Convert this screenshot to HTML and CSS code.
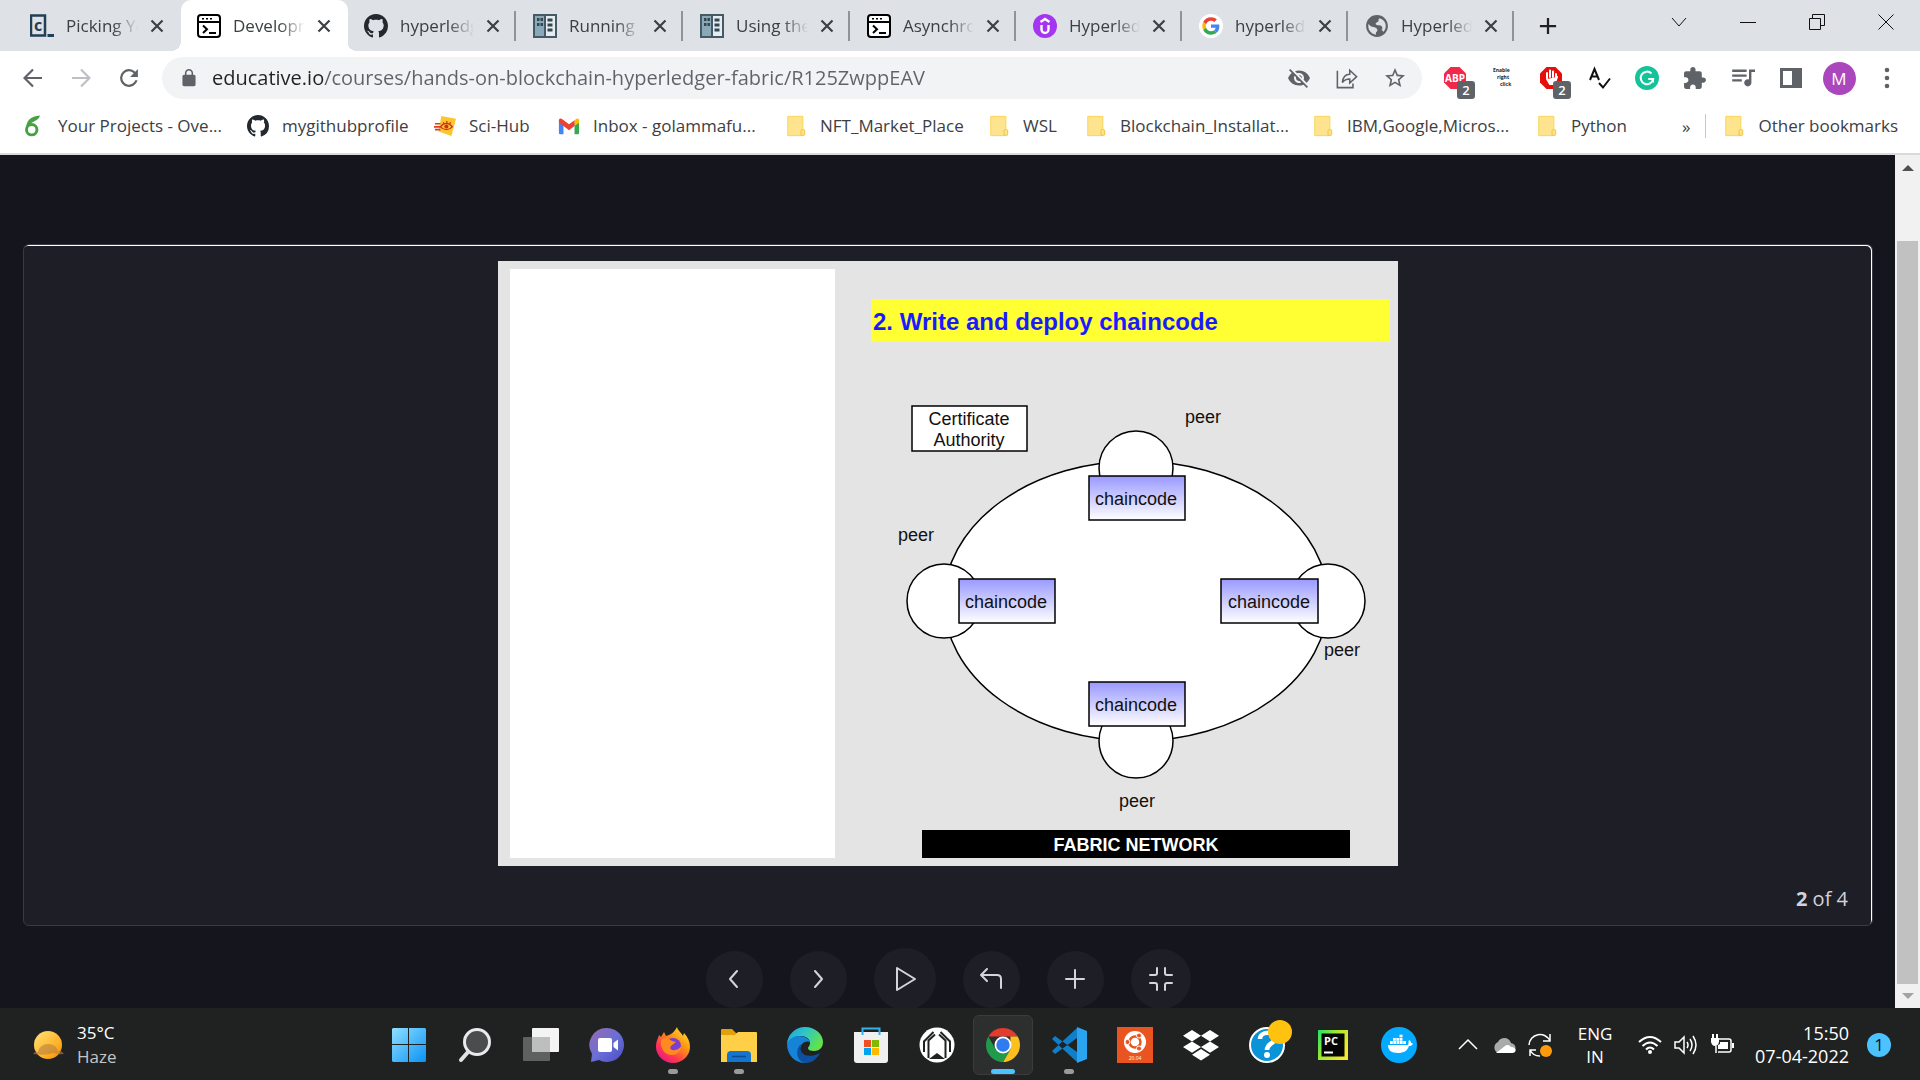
FILE: index.html
```html
<!DOCTYPE html>
<html lang="en">
<head>
<meta charset="utf-8">
<meta name="viewport" content="width=device-width, initial-scale=1">
<title>Developing with Hyperledger Fabric</title>
<link rel="stylesheet" href="styles.css">
</head>
<body>
<svg class="sprite" aria-hidden="true">
  <symbol id="i-github" viewBox="0 0 16 16"><path d="M8 0C3.58 0 0 3.58 0 8c0 3.54 2.29 6.53 5.47 7.59.4.07.55-.17.55-.38 0-.19-.01-.82-.01-1.49-2.01.37-2.53-.49-2.69-.94-.09-.23-.48-.94-.82-1.13-.28-.15-.68-.52-.01-.53.63-.01 1.08.58 1.23.82.72 1.21 1.87.87 2.33.66.07-.52.28-.87.51-1.07-1.78-.2-3.64-.89-3.64-3.95 0-.87.31-1.59.82-2.15-.08-.2-.36-1.02.08-2.12 0 0 .67-.21 2.2.82.64-.18 1.32-.27 2-.27s1.36.09 2 .27c1.53-1.04 2.2-.82 2.2-.82.44 1.1.16 1.92.08 2.12.51.56.82 1.27.82 2.15 0 3.07-1.87 3.75-3.65 3.95.29.25.54.73.54 1.48 0 1.07-.01 1.93-.01 2.2 0 .21.15.46.55.38A8.01 8.01 0 0 0 16 8c0-4.42-3.58-8-8-8z" fill="#24292f"/></symbol>
  <symbol id="i-terminal" viewBox="0 0 24 24"><rect x="1" y="1" width="22" height="22" rx="3" fill="#fff" stroke="#000" stroke-width="2"/><path d="M1 8h22" stroke="#000" stroke-width="2"/><path d="M5 4.700h2M9 4.700h2M13 4.700h2" stroke="#000" stroke-width="1.500"/><path d="M6 11.500l4 3.700-4 3.800M12 19h7" fill="none" stroke="#000" stroke-width="2"/></symbol>
  <symbol id="i-servers" viewBox="0 0 24 24"><rect x="1" y="1" width="22" height="22" fill="#e4eef2" stroke="#455a64" stroke-width="2"/><path d="M2 2h10v20H2z" fill="#8aa9b8"/><path d="M12 1v22" stroke="#455a64" stroke-width="2"/><path d="M4 5.500h2.500M7.500 5.500H10M4 10.500h2.500M7.500 10.500H10M14.500 6h5M14.500 11h5M14.500 16h5" stroke="#37474f" stroke-width="3"/></symbol>
  <symbol id="i-close" viewBox="0 0 14 14"><path d="M1.500 1.500l11 11M12.500 1.500l-11 11" stroke="#3c4043" stroke-width="2.200"/></symbol>
  <symbol id="i-folder" viewBox="0 0 20 24"><path d="M1 1.500h16.500v15l2 1v5H1z" fill="#ffe48f"/><path d="M1 1.500h16.500v14M1 1.500v21h16" fill="none" stroke="#fbd34d"/><path d="M15.500 22v-5.500q2-1.500 4 0v5q-2 1-4 .5z" fill="#ffe48f" stroke="#efc23d"/></symbol>
  <symbol id="i-hex" viewBox="0 0 24 24"><path d="M7.500 1h9L23 7.500v9L16.500 23h-9L1 16.500v-9z"/></symbol>
</svg>

<header class="browser">
  <div class="tabstrip">
    <nav class="tabs" aria-label="Open tabs">
      <div class="tab"><svg class="fav" viewBox="0 0 24 24"><path d="M1 1.500h14v20H1z" fill="none" stroke="#204056" stroke-width="2.500"/><text x="4" y="17" class="glyph-c">c</text><path d="M17.500 21.500H24" stroke="#204056" stroke-width="3"/></svg><span class="tab-title">Picking Your</span><button class="close" aria-label="Close tab"><svg><use href="#i-close"/></svg></button></div>
      <div class="tab active"><svg class="fav"><use href="#i-terminal"/></svg><span class="tab-title">Developme</span><button class="close" aria-label="Close tab"><svg><use href="#i-close"/></svg></button></div>
      <div class="tab"><svg class="fav"><use href="#i-github"/></svg><span class="tab-title">hyperledger</span><button class="close" aria-label="Close tab"><svg><use href="#i-close"/></svg></button></div>
      <div class="tab"><svg class="fav"><use href="#i-servers"/></svg><span class="tab-title">Running</span><button class="close" aria-label="Close tab"><svg><use href="#i-close"/></svg></button></div>
      <div class="tab"><svg class="fav"><use href="#i-servers"/></svg><span class="tab-title">Using the</span><button class="close" aria-label="Close tab"><svg><use href="#i-close"/></svg></button></div>
      <div class="tab"><svg class="fav"><use href="#i-terminal"/></svg><span class="tab-title">Asynchron</span><button class="close" aria-label="Close tab"><svg><use href="#i-close"/></svg></button></div>
      <div class="tab"><svg class="fav" viewBox="0 0 24 24"><circle cx="12" cy="12" r="12" fill="#a435f0"/><path d="M7.500 8L12 5l4.500 3M8.500 11v4.500a3.500 3.500 0 0 0 7 0V11" fill="none" stroke="#fff" stroke-width="2.400"/></svg><span class="tab-title">Hyperledger</span><button class="close" aria-label="Close tab"><svg><use href="#i-close"/></svg></button></div>
      <div class="tab"><svg class="fav" viewBox="-9 -9 66 66"><circle cx="24" cy="24" r="33" fill="#fff"/><path fill="#EA4335" d="M24 9.500c3.540 0 6.710 1.220 9.210 3.600l6.850-6.850C35.900 2.380 30.470 0 24 0 14.620 0 6.510 5.380 2.560 13.220l7.980 6.190C12.430 13.720 17.740 9.500 24 9.500z"/><path fill="#4285F4" d="M46.980 24.550c0-1.570-.15-3.090-.38-4.550H24v9.020h12.940c-.58 2.960-2.260 5.480-4.780 7.180l7.730 6c4.510-4.180 7.090-10.360 7.090-17.650z"/><path fill="#FBBC05" d="M10.530 28.590c-.48-1.450-.76-2.990-.76-4.590s.27-3.140.76-4.590l-7.980-6.190C.92 16.460 0 20.120 0 24c0 3.880.92 7.540 2.560 10.780l7.970-6.190z"/><path fill="#34A853" d="M24 48c6.480 0 11.930-2.130 15.890-5.810l-7.730-6c-2.150 1.450-4.920 2.300-8.160 2.300-6.260 0-11.570-4.220-13.470-9.910l-7.980 6.190C6.510 42.620 14.620 48 24 48z"/></svg><span class="tab-title">hyperledger</span><button class="close" aria-label="Close tab"><svg><use href="#i-close"/></svg></button></div>
      <div class="tab"><svg class="fav" viewBox="1 1 22 22"><path fill="#5f6368" d="M12 2C6.480 2 2 6.480 2 12s4.480 10 10 10 10-4.480 10-10S17.520 2 12 2zm-1 17.930c-3.950-.49-7-3.850-7-7.930 0-.62.08-1.210.21-1.790L6 12c2 1.500 4 .5 5.500 2s1 2.500-.5 4zm6.900-2.540c-.26-.81-1-1.390-1.900-1.390 1-1.500 1.500-2.500 0-4-1.500-1-4 0-5-1.500-.8-1.500 1-2 2-2.500 1-.6-.5-2 1.500-3 2.500.8 5.500 3.060 5.500 7 0 2.080-.8 3.970-2.100 5.390z"/></svg><span class="tab-title">Hyperledger</span><button class="close" aria-label="Close tab"><svg><use href="#i-close"/></svg></button></div>
    </nav>
    <button class="newtab" aria-label="New tab"><svg viewBox="0 0 20 20"><path d="M10 1v18M1 10h18" stroke="#202124" stroke-width="2.500"/></svg></button>
    <div class="window-controls">
      <button aria-label="Search tabs"><svg viewBox="0 0 16 16"><path d="M1 4l7 8 7-8" /></svg></button>
      <button aria-label="Minimize"><svg viewBox="0 0 16 16"><path d="M0 8.500h16"/></svg></button>
      <button aria-label="Restore"><svg viewBox="0 0 16 16"><path d="M.5 4.500h11v11H.5zM3.500 4V.5h12v11H12"/></svg></button>
      <button aria-label="Close window"><svg viewBox="0 0 16 16"><path d="M.5.5l15 15M15.500.5l-15 15"/></svg></button>
    </div>
  </div>

  <div class="toolbar">
    <div class="nav-buttons">
      <button aria-label="Back"><svg viewBox="0 0 20 20"><path d="M19 10H2M10 1.500L1.500 10l8.500 8.500" fill="none" stroke="#5f6368" stroke-width="2.200"/></svg></button>
      <button aria-label="Forward" disabled><svg viewBox="0 0 20 20"><path d="M1 10h17M10 1.500l8.500 8.500-8.500 8.500" fill="none" stroke="#bdc1c6" stroke-width="2.200"/></svg></button>
      <button aria-label="Reload"><svg viewBox="3 3 18 18"><path fill="#5f6368" d="M17.650 6.350A7.958 7.958 0 0 0 12 4a8 8 0 1 0 7.730 10h-2.080A6 6 0 1 1 12 6c1.660 0 3.140.69 4.220 1.780L13 11h7V4z"/></svg></button>
    </div>
    <div class="omnibox">
      <svg class="lock" viewBox="3 1 18 22"><path fill="#5f6368" d="M18 8h-1V6c0-2.760-2.240-5-5-5S7 3.240 7 6v2H6c-1.100 0-2 .9-2 2v10c0 1.100.9 2 2 2h12c1.100 0 2-.9 2-2V10c0-1.100-.9-2-2-2zM15.100 8H8.900V6c0-1.710 1.390-3.100 3.100-3.100s3.100 1.390 3.100 3.100z"/></svg>
      <input class="url" type="text" aria-label="Address" value="educative.io/courses/hands-on-blockchain-hyperledger-fabric/R125ZwppEAV">
      <button aria-label="Third-party cookies blocked"><svg viewBox="1 1 22 22"><path fill="#5f6368" d="M12 7c2.760 0 5 2.240 5 5 0 .65-.13 1.260-.36 1.830l2.920 2.920c1.510-1.260 2.700-2.890 3.430-4.750-1.730-4.390-6-7.500-11-7.500-1.400 0-2.740.25-3.980.7l2.160 2.160C10.740 7.130 11.350 7 12 7zM2 4.270l2.280 2.280.46.46A11.800 11.800 0 0 0 1 12c1.730 4.390 6 7.500 11 7.500 1.550 0 3.030-.3 4.380-.84l.42.42L19.730 22 21 20.730 3.270 3zM7.530 9.800l1.550 1.550c-.05.21-.08.43-.08.65 0 1.660 1.340 3 3 3 .22 0 .44-.03.65-.08l1.550 1.550c-.67.33-1.410.53-2.200.53-2.760 0-5-2.240-5-5 0-.79.2-1.530.53-2.200zm4.310-.78l3.150 3.150.02-.16c0-1.660-1.340-3-3-3z"/></svg></button>
      <button aria-label="Share"><svg viewBox="0 0 24 24"><path d="M1.500 4v18.500h17V18M7 17c.5-6 3.500-9 8-9V3.500l7.500 7-7.500 7V13c-3.500 0-6 1-8 4z" fill="none" stroke="#5f6368" stroke-width="1.700"/></svg></button>
      <button aria-label="Bookmark this tab"><svg viewBox="1 1 22 22"><path fill="#5f6368" d="M22 9.240l-7.190-.62L12 2 9.190 8.630 2 9.240l5.460 4.730L5.820 21 12 17.270 18.180 21l-1.630-7.030zM12 15.400l-3.760 2.270 1-4.280-3.320-2.880 4.380-.38L12 6.100l1.710 4.040 4.380.38-3.320 2.880 1 4.280z"/></svg></button>
    </div>
    <div class="extensions">
      <button aria-label="Adblock Plus"><svg viewBox="0 0 24 24"><use href="#i-hex" fill="#f0284a"/><text x="12" y="16" class="glyph-abp">ABP</text></svg><span class="badge">2</span></button>
      <button aria-label="Enable right click"><svg viewBox="0 0 24 24"><text x="2" y="6" class="glyph-tiny">Enable</text><text x="6" y="13" class="glyph-tiny">right</text><text x="9" y="20" class="glyph-tiny">click</text></svg></button>
      <button aria-label="AdBlock"><svg viewBox="0 0 24 24"><use href="#i-hex" fill="#e60d0d"/><path d="M8 12V7M11 11V4.500M14 11V5.500M17 12V8M8 13l3 5h4.500l2.500-7" stroke="#fff" stroke-width="2" stroke-linecap="round" fill="#fff"/></svg><span class="badge">2</span></button>
      <button aria-label="Spell check"><svg viewBox="0 0 24 24"><path d="M3 14L7.500 3 12 14M5 10.500h6M12 17l4 4.500 7-9" fill="none" stroke="#111" stroke-width="2"/></svg></button>
      <button aria-label="Grammar check"><svg viewBox="0 0 24 24"><circle cx="12" cy="12" r="12" fill="#15c39a"/><path d="M16.500 7.500a6.300 6.300 0 1 0 1.700 5.500h-5M18 16.500V13" fill="none" stroke="#fff" stroke-width="2"/></svg></button>
      <button aria-label="Extensions"><svg viewBox="1 0 23 23"><path fill="#5f6368" d="M20.500 11H19V7c0-1.100-.9-2-2-2h-4V3.500C13 2.120 11.880 1 10.500 1S8 2.120 8 3.500V5H4c-1.100 0-1.990.9-1.990 2v3.800H3.500c1.490 0 2.700 1.210 2.700 2.700s-1.210 2.700-2.700 2.700H2V20c0 1.100.9 2 2 2h3.800v-1.500c0-1.490 1.210-2.700 2.700-2.700 1.490 0 2.700 1.210 2.700 2.700V22H17c1.100 0 2-.9 2-2v-4h1.500c1.380 0 2.500-1.120 2.500-2.500S21.880 11 20.500 11z"/></svg></button>
      <button aria-label="Media controls"><svg viewBox="2 3 20 20"><path fill="#5f6368" d="M15 6H3v2h12V6zm0 4H3v2h12v-2zM3 16h8v-2H3v2zM17 6v8.180c-.31-.11-.65-.18-1-.18-1.660 0-3 1.340-3 3s1.340 3 3 3 3-1.340 3-3V8h3V6h-5z"/></svg></button>
      <button aria-label="Side panel"><svg viewBox="0 0 24 24"><path d="M2.500 3.500h19v17h-19zM14.500 3.500h7v17h-7z" fill="none" stroke="#5f6368" stroke-width="3"/><path d="M15 3h6v18h-6z" fill="#5f6368"/></svg></button>
      <button aria-label="Profile"><span class="avatar">M</span></button>
      <button aria-label="Menu"><svg viewBox="0 0 24 24"><g fill="#5f6368"><circle cx="12" cy="4" r="2.300"/><circle cx="12" cy="12" r="2.300"/><circle cx="12" cy="20" r="2.300"/></g></svg></button>
    </div>
  </div>

  <nav class="bookmarks" aria-label="Bookmarks">
    <a href="#"><svg viewBox="0 0 24 24"><circle cx="9.500" cy="16" r="5.700" fill="none" stroke="#47a141" stroke-width="3.200"/><path d="M3.500 15C3 7 8 1 18.500.5 17 7 10 6 7 11" fill="#47a141"/></svg>Your Projects - Ove...</a>
    <a href="#"><svg><use href="#i-github"/></svg>mygithubprofile</a>
    <a href="#"><svg viewBox="0 0 24 24"><path d="M8 1l16 3-5 19L5 18z" fill="#fdc52e"/><path d="M1 9.500h6M0 13h7M1 16h6" stroke="#d9411e" stroke-width="1.800"/><path d="M7 13c4-5 9-5 13 0-4 4-9 4-13 0zM10 8l1 2M14 6.500V9M18 8l-1 2" fill="none" stroke="#c8321c" stroke-width="1.400"/><circle cx="13.500" cy="12.500" r="2.200" fill="#c8321c"/></svg>Sci-Hub</a>
    <a href="#"><svg viewBox="0 0 24 24"><path d="M1 5v14.500q0 1.500 1.500 1.500H6V9z" fill="#4285f4"/><path d="M23 5v14.500q0 1.500-1.500 1.500H18V9z" fill="#34a853"/><path d="M18 6l2-1.800q3-1.200 3 2V8.500L18 12z" fill="#fbbc04"/><path d="M1 8.500V6q0-3 3-1.800l8 6 6-4.500V12l-6 4.500L6 12z" fill="#ea4335"/></svg>Inbox - golammafu...</a>
    <a href="#"><svg><use href="#i-folder"/></svg>NFT_Market_Place</a>
    <a href="#"><svg><use href="#i-folder"/></svg>WSL</a>
    <a href="#"><svg><use href="#i-folder"/></svg>Blockchain_Installat...</a>
    <a href="#"><svg><use href="#i-folder"/></svg>IBM,Google,Micros...</a>
    <a href="#"><svg><use href="#i-folder"/></svg>Python</a>
    <button class="more" aria-label="More bookmarks">»</button>
    <a class="other" href="#"><svg><use href="#i-folder"/></svg>Other bookmarks</a>
  </nav>
</header>

<div class="viewport">
  <main class="page">
    <section class="card">
      <svg class="slide" viewBox="0 0 900 605" role="img" aria-label="Write and deploy chaincode">
        <defs><linearGradient id="cc" x1="0" y1="0" x2="0" y2="1"><stop offset="0" stop-color="#9999ff"/><stop offset="1" stop-color="#fff"/></linearGradient></defs>
        <rect width="900" height="605" fill="#e4e4e4"/>
        <rect x="12" y="8" width="325" height="589" fill="#fff"/>
        <rect x="373" y="38" width="519" height="43" fill="#ff3"/>
        <text class="slide-title" x="375" y="69">2. Write and deploy chaincode</text>
        <g class="shape">
          <rect x="414" y="145" width="115" height="45"/>
          <ellipse cx="638" cy="340" rx="192" ry="140"/>
          <circle cx="638" cy="207" r="37"/>
          <circle cx="446" cy="340" r="37"/>
          <circle cx="830" cy="340" r="37"/>
          <circle cx="638" cy="480" r="37"/>
        </g>
        <g class="shape code">
          <rect x="591" y="215" width="96" height="44"/>
          <rect x="461" y="318" width="96" height="44"/>
          <rect x="723" y="318" width="97" height="44"/>
          <rect x="591" y="421" width="96" height="44"/>
        </g>
        <g class="label">
          <text x="471" y="164">Certificate</text><text x="471" y="185">Authority</text>
          <text x="638" y="244">chaincode</text><text x="508" y="347">chaincode</text>
          <text x="771" y="347">chaincode</text><text x="638" y="450">chaincode</text>
          <text x="705" y="162">peer</text><text x="418" y="280">peer</text>
          <text x="844" y="395">peer</text><text x="639" y="546">peer</text>
        </g>
        <rect x="424" y="569" width="428" height="28" fill="#000"/>
        <text class="network" x="638" y="590">FABRIC NETWORK</text>
      </svg>
      <p class="counter"><b>2</b> of 4</p>
    </section>
    <div class="controls">
      <button aria-label="Previous"><svg viewBox="0 0 24 24"><path d="M15 4l-7 8 7 8"/></svg></button>
      <button aria-label="Next"><svg viewBox="0 0 24 24"><path d="M9 4l7 8-7 8"/></svg></button>
      <button class="play" aria-label="Play"><svg viewBox="0 0 24 24"><path d="M4 1v22L22 12z"/></svg></button>
      <button aria-label="Restart"><svg viewBox="0 0 24 24"><path d="M8 2L2 8l6 6M2 8h16q4 0 4 4v9"/></svg></button>
      <button aria-label="Zoom in"><svg viewBox="0 0 24 24"><path d="M12 3v18M3 12h18"/></svg></button>
      <button class="shrink" aria-label="Exit full screen"><svg viewBox="0 0 24 24"><path d="M8 1v5q0 2-2 2H1M16 1v5q0 2 2 2h5M8 23v-5q0-2-2-2H1M16 23v-5q0-2 2-2h5"/></svg></button>
    </div>
  </main>
  <div class="scrollbar" aria-hidden="true"><span class="arrow up"></span><span class="thumb"></span><span class="arrow down"></span></div>
</div>

<footer class="taskbar">
  <div class="weather">
    <svg viewBox="0 0 32 32"><defs><linearGradient id="sun" x1="0" y1="0" x2="1" y2="1"><stop offset="0" stop-color="#ffe27a"/><stop offset=".6" stop-color="#ffb52e"/><stop offset="1" stop-color="#f78a00"/></linearGradient></defs><circle cx="16" cy="16" r="14" fill="url(#sun)"/><path d="M1 25q2-3 5-2 2-8 10-8t10 7q3-1 6 3-8 1-10-1-9 3-21 1z" fill="#b5803f" opacity=".6"/></svg>
    <p>35°C<br><span>Haze</span></p>
  </div>
  <nav class="apps" aria-label="Apps">
    <button aria-label="Start"><svg viewBox="0 0 36 36"><defs><linearGradient id="win" x1="0" y1="0" x2="1" y2="1"><stop offset="0" stop-color="#8fe0ff"/><stop offset="1" stop-color="#0a92f5"/></linearGradient></defs><path fill="url(#win)" d="M2 1h15v16H1V2zM18 1h16l1 1v15H18zM1 18h16v17H2l-1-1zM18 18h17v16l-1 1H18z"/></svg></button>
    <button aria-label="Search"><svg viewBox="0 0 36 36"><circle cx="20" cy="15" r="12.500" fill="#4a4c4d" stroke="#e8eaeb" stroke-width="3"/><path d="M11 25l-7 8" stroke="#e0e3e5" stroke-width="4" stroke-linecap="round"/></svg></button>
    <button aria-label="Task view"><svg viewBox="0 0 36 36"><rect x="9" y="1" width="27" height="24" rx="1" fill="#f4f4f4"/><rect x="0" y="10" width="27" height="24" rx="1" fill="#5f6060"/><path d="M9 10h18v15H9z" fill="#bebebe"/></svg></button>
    <button aria-label="Chat"><svg viewBox="0 0 36 36"><defs><linearGradient id="chat" x1="0" y1="0" x2="1" y2="1"><stop offset="0" stop-color="#9a6aae"/><stop offset=".5" stop-color="#6b6fd6"/><stop offset="1" stop-color="#4b4fc4"/></linearGradient></defs><path d="M18 1a17 17 0 1 1-8 32l-8 2 1-8A17 17 0 0 1 18 1z" fill="url(#chat)"/><rect x="9" y="11" width="14" height="14" rx="2" fill="#fff"/><path d="M24.500 16l4.500-3.500v11L24.500 20z" fill="#fff"/></svg></button>
    <button class="open" aria-label="Firefox"><svg viewBox="0 0 36 36"><defs><linearGradient id="fx" x1="1" y1="0" x2=".2" y2="1"><stop offset="0" stop-color="#fff44f"/><stop offset=".4" stop-color="#ff980e"/><stop offset=".75" stop-color="#ff3750"/><stop offset="1" stop-color="#e31587"/></linearGradient></defs><path d="M22 0c1 4 5 6 6 9l1-3c4 4 6 9 6 14a17 16 0 0 1-34 0c0-6 2-8 3-12l2 2 3-5 2 4c4-1 8-3 11-9z" fill="url(#fx)"/><circle cx="18" cy="19" r="8" fill="#7a3fd0"/><path d="M6 13c5-4 8-1 11 1l4 1-5 4c-2 2 0 5 4 4 3 0 5-3 7-4-1 6-6 9-10 9C10 28 5 22 6 13z" fill="#ff8a1e"/></svg></button>
    <button class="open" aria-label="File Explorer"><svg viewBox="0 0 36 36"><path d="M0 3q0-1 1-1h10l4 4h19v10H0z" fill="#e3a008"/><path d="M0 8h14l3-3h18q1 0 1 1v29H0z" fill="#ffcf48"/><path d="M6 35v-7q0-4 4-4h16q4 0 4 4v7z" fill="#1375cf"/><path d="M11 29.500h14" stroke="#0b4a8f" stroke-width="1.500"/></svg></button>
    <button aria-label="Edge"><svg viewBox="0 0 36 36"><defs><linearGradient id="ed" x1="0" y1="0" x2="1" y2=".5"><stop offset="0" stop-color="#1fa0e0"/><stop offset=".5" stop-color="#2fc6c6"/><stop offset="1" stop-color="#62e24a"/></linearGradient></defs><path d="M0 17A18 18 0 0 1 18 0c10 0 18 7 18 15 0 6-4 9-9 9-4 0-6-1-6-3 0-1 2-2 2-5 0-4-4-7-9-7-6 0-11 3-14 8z" fill="url(#ed)"/><path d="M0 17c2-5 6-8 12-8 6 0 10 3 11 6-4-2-10 1-10 8 0 7 6 11 14 10a18 18 0 0 1-9 3C8 36 0 28 0 17z" fill="#1583d8"/><path d="M14 17c-3 9 5 16 19 9-3 6-8 10-15 10C9 34 8 22 14 17z" fill="#0d50a0"/></svg></button>
    <button aria-label="Microsoft Store"><svg viewBox="0 0 36 36"><path d="M9.500 6V1.500h17V6" fill="none" stroke="#35b2ea" stroke-width="2"/><path d="M1 5h34v28q0 3-3 3H4q-3 0-3-3z" fill="#f0f0f0"/><path d="M9.500 8V5M26.500 8V5" stroke="#35b2ea" stroke-width="2"/><path d="M11 13h7v7h-7z" fill="#f25022"/><path d="M19 13h7v7h-7z" fill="#7fba00"/><path d="M11 21h7v7h-7z" fill="#00a4ef"/><path d="M19 21h7v7h-7z" fill="#ffb900"/></svg></button>
    <button aria-label="Launcher"><svg viewBox="0 0 36 36"><circle cx="18" cy="18" r="17.500" fill="#fff"/><path d="M5 25V14.500L14.500 5M31 25V14.500L21.500 5M9.500 31V13.500L16 7.500M26.500 31V13.500L20 7.500" fill="none" stroke="#202222" stroke-width="2"/><path d="M10 32l8-6 8 6z" fill="#202222"/></svg></button>
    <button class="current" aria-label="Chrome"><svg viewBox="0 0 36 36"><path d="M3.300 9.500a17 17 0 0 1 29.400 0H18z" fill="#e33b2e"/><path d="M32.700 9.500A17 17 0 0 1 18 35l7.400-12.700L25.400 9.500z" fill="#fcc01e"/><path d="M3.300 9.500A17 17 0 0 0 18 35l7-12H11z" fill="#219a4c"/><circle cx="18" cy="18" r="8.500" fill="#fff"/><circle cx="18" cy="18" r="6.700" fill="#2f7bf0"/></svg></button>
    <button class="open" aria-label="Visual Studio Code"><svg viewBox="0 0 36 36"><path d="M26 1l-25 23 3 3 22-16zM26 35L1 12l3-3 22 16z" fill="#0f7fca"/><path d="M26 0l10 4v28l-10 4z" fill="#2aa4ee"/></svg></button>
    <button aria-label="Ubuntu"><svg viewBox="0 0 36 36"><path d="M0 0h36v36H0z" fill="#e95420"/><circle cx="18" cy="15" r="11" fill="#fff"/><circle cx="18" cy="15" r="5.500" fill="none" stroke="#e95420" stroke-width="2.500"/><g fill="#e95420" stroke="#fff"><circle cx="10.500" cy="15" r="2.500"/><circle cx="22" cy="8.500" r="2.500"/><circle cx="22" cy="21.500" r="2.500"/></g><text x="18" y="33" class="glyph-ver">20.04</text></svg></button>
    <button aria-label="Dropbox"><svg viewBox="0 0 24 24"><path fill="#fff" d="M6 2l6 3.800-6 3.800-6-3.800zM18 2l6 3.800-6 3.800-6-3.800zM0 13.400l6-3.800 6 3.800-6 3.800zM18 9.600l6 3.800-6 3.800-6-3.800zM6 18.500l6-3.800 6 3.800-6 3.800z"/></svg></button>
    <button aria-label="Get Help"><svg viewBox="0 0 36 36"><circle cx="18" cy="18" r="17" fill="#0a93d6" stroke="#fff" stroke-width="2"/><path d="M11 12c0-8 15-8 15-1 0 6-8 5-8 12" fill="none" stroke="#fff" stroke-width="4.500"/><circle cx="18" cy="28" r="3" fill="#fff"/></svg><span class="dot"></span></button>
    <button aria-label="PyCharm"><svg viewBox="0 0 36 36"><defs><linearGradient id="py" x1="0" y1="0" x2="1" y2=".6"><stop offset="0" stop-color="#21e06a"/><stop offset=".5" stop-color="#a8e62e"/><stop offset="1" stop-color="#f3e832"/></linearGradient></defs><path d="M3 3h30v30H3z" fill="url(#py)"/><path d="M6.500 6.500h23v23h-23z" fill="#050505"/><text x="9" y="17.500" class="glyph-pc">PC</text><path d="M9 25.500h9" stroke="#fff" stroke-width="2"/></svg></button>
    <button aria-label="Docker"><svg viewBox="0 0 36 36"><circle cx="18" cy="18" r="18" fill="#04aaff"/><path d="M7 18h20c1-2 0-3 1-5 2 1 2 2 2 3l2 .5c-1 2-2 2.500-4 2.500-2 5-5 7-11 7-7 0-10-3-10-8z" fill="#fff"/><path d="M9 15.500h16M12 12.300h10" stroke="#fff" stroke-width="2.800" stroke-dasharray="2.800 .5"/><path d="M18.500 9h3" stroke="#fff" stroke-width="2.600"/></svg></button>
  </nav>
  <div class="tray">
    <button aria-label="Show hidden icons"><svg viewBox="0 0 24 24"><path d="M3 16l9-9 9 9"/></svg></button>
    <button aria-label="OneDrive"><svg viewBox="0 0 24 24"><path d="M6 20a6 6 0 0 1 0-11c2-5 11-6 13 1 6 1 6 9 0 10z" fill="#aaa" stroke="none"/><path d="M4 20l9-7c2-2 5-1 6 1 6 0 6 6 1 6z" fill="#fff" stroke="none"/></svg></button>
    <button aria-label="Update"><svg viewBox="0 0 24 24"><path d="M1 12A11 11 0 0 1 22 8M22 1v7h-7M2 23v-6h6M2 17a11 11 0 0 0 10 6"/><circle cx="18" cy="18" r="6" fill="#ff9a0a" stroke="none"/></svg></button>
    <button class="lang">ENG<br>IN</button>
    <button aria-label="Wi-Fi"><svg viewBox="0 0 24 24"><path d="M1 9q11-10 22 0M4.500 13q7.500-7 15 0M8 16.500q4-4 8 0" stroke-width="2"/><circle cx="12" cy="19" r="2" fill="#fff" stroke="none"/></svg></button>
    <button aria-label="Volume"><svg viewBox="0 0 24 24"><path d="M1 9h4l5-5v16l-5-5H1zM13 9q2 3 0 6M16 6q4 6 0 12M19 3q6 9 0 18"/></svg></button>
    <button aria-label="Battery"><svg viewBox="0 0 24 24"><path d="M6 13v7M9 6h10q2 0 2 2v9q0 2-2 2H8" /><path d="M10 9h8v7H8v-4l2-1zM1 5h8v4q-1 4-4 4T1 9zM22 10h2v5h-2zM2 1h2v4H2zM6 1h2v4H6z" fill="#fff" stroke="none"/></svg></button>
    <time class="clock" datetime="2022-04-07T15:50">15:50<br>07-04-2022</time>
    <span class="notice">1</span>
  </div>
</footer>
</body>
</html>
```

FILE: styles.css
```css
* { box-sizing: border-box; }

body {
  margin: 0;
  height: 100vh;
  display: flex;
  flex-direction: column;
  overflow: hidden;
  font-family: "Open Sans", "Noto Sans", sans-serif;
  font-size: 17px;
  color: #3c4043;
}

button {
  border: 0;
  padding: 0;
  background: none;
  color: inherit;
  font: inherit;
  display: flex;
  align-items: center;
  justify-content: center;
}

a { color: inherit; text-decoration: none; }
p { margin: 0; }
svg { display: block; flex: none; }
.sprite { position: absolute; width: 0; height: 0; }

/* Browser frame */
.browser { background: #fff; border-bottom: 2px solid #dadada; }

.tabstrip {
  display: flex;
  height: 51px;
  padding-left: 14px;
  background: #dee1e6;
}
.tabs {
  display: grid;
  grid-template-columns: 167px 167px 169px repeat(2, 167px) repeat(4, 166px);
}
.tab {
  position: relative;
  display: flex;
  align-items: center;
  padding: 0 16px;
  border-right: 1px solid transparent;
}
.tab:nth-child(n+3)::after {
  content: "";
  position: absolute;
  right: 0;
  top: 11px;
  width: 2px;
  height: 30px;
  background: #909398;
}
.fav { width: 24px; height: 24px; }
.tab-title {
  flex: 1;
  margin-left: 12px;
  overflow: hidden;
  white-space: nowrap;
  mask-image: linear-gradient(90deg, #000 65%, transparent);
}
.close { width: 14px; margin-left: 12px; }
.close svg { width: 14px; height: 14px; }
.tab.active { background: #fff; border-radius: 10px 10px 0 0; }
.tab.active::before, .tab.active::after {
  content: "";
  position: absolute;
  bottom: 0;
  width: 10px;
  height: 10px;
}
.tab.active::before { left: -10px; background: radial-gradient(circle at 0 0, transparent 10px, #fff 10px); }
.tab.active::after { right: -10px; background: radial-gradient(circle at 100% 0, transparent 10px, #fff 10px); }
.newtab { width: 66px; }
.newtab svg { width: 18px; height: 18px; }
.window-controls { display: flex; margin-left: auto; height: 43px; }
.window-controls button { width: 69px; }
.window-controls svg { width: 16px; height: 16px; fill: none; stroke: #111; }

.toolbar {
  display: flex;
  align-items: center;
  height: 54px;
  padding-right: 9px;
}
.nav-buttons { display: flex; padding: 0 9px; }
.nav-buttons button { width: 48px; }
.nav-buttons svg { width: 20px; height: 20px; }
.omnibox {
  flex: 1;
  display: flex;
  align-items: center;
  height: 42px;
  padding: 0 3px 0 19px;
  border-radius: 21px;
  background: #f1f3f4;
}
.omnibox button { width: 48px; }
.omnibox button svg { width: 22px; height: 22px; }
.lock { width: 16px; height: 18px; }
.url {
  flex: 1;
  min-width: 0;
  margin: 0 0 0 15px;
  padding: 0;
  border: 0;
  outline: 0;
  font: inherit;
  font-size: 20px;
  line-height: 28px;
  color: transparent;
  background: linear-gradient(90deg, #202124 112px, #5f6368 112px);
  background-clip: text;
}
.extensions { display: flex; padding-left: 9px; }
.extensions button { position: relative; width: 48px; height: 42px; }
.extensions svg { width: 24px; height: 24px; }
.badge {
  position: absolute;
  left: 26px;
  bottom: 0;
  width: 18px;
  border-radius: 3px;
  background: #5f6368;
  color: #fff;
  font-size: 13px;
  font-weight: 600;
  line-height: 18px;
}
.avatar {
  width: 33px;
  height: 33px;
  border-radius: 50%;
  background: #ab47bc;
  color: #fff;
  line-height: 33px;
}

.bookmarks {
  display: grid;
  grid-template-columns: 224px 187px 124px 227px 203px 97px 227px 224px auto 1fr auto;
  align-items: center;
  height: 48px;
  padding: 0 22px 6px;
  white-space: nowrap;
}
.bookmarks a { display: flex; align-items: center; gap: 12px; line-height: 24px; }
.bookmarks svg { width: 24px; height: 22px; }
.bookmarks .more { justify-self: end; margin-right: 15px; }
.bookmarks .other { padding-left: 16px; border-left: 1px solid #c4c7cb; }

/* Course page */
.viewport { flex: 1; min-height: 0; display: flex; background: #15151e; }
.page { flex: 1; padding: 89px 22px 0 23px; overflow: hidden; }
.card {
  padding: 16px 24px 12px;
  border: 1px solid #3a3a44;
  border-radius: 6px;
  background: #1e1e27;
  box-shadow: inset -1px 1px 0 #fff;
}
.slide { width: 100%; max-width: 900px; margin: 0 auto; }
.slide text { font-family: "Liberation Sans", Arial, sans-serif; }
.slide-title { font-size: 24px; font-weight: bold; fill: #1a1aff; }
.shape { fill: #fff; stroke: #000; stroke-width: 1.5px; }
.code { fill: url(#cc); }
.label { font-size: 18px; fill: #111; text-anchor: middle; }
.network { font-size: 18px; font-weight: bold; fill: #fff; text-anchor: middle; }
.counter { margin-top: 19px; text-align: right; font-size: 20px; line-height: 28px; color: #d2d2da; }

.controls { display: flex; justify-content: center; align-items: center; gap: 27px; margin-top: 22px; }
.controls button { width: 57px; height: 57px; border-radius: 50%; background: #1e1e27; }
.controls svg { width: 24px; height: 24px; fill: none; stroke: #d4d4da; stroke-width: 2px; stroke-linecap: round; stroke-linejoin: round; }
.controls .play { width: 62px; height: 62px; }
.controls .shrink { width: 60px; height: 60px; }

.scrollbar { display: flex; flex-direction: column; align-items: center; width: 25px; background: #f1f1f1; }
.arrow { border: 6px solid transparent; }
.up { margin: 4px 0 70px; border-bottom-color: #505050; }
.down { margin: 9px 0 3px; border-top-color: #a3a3a3; }
.thumb { flex: 1; width: 21px; background: #c1c1c1; }

/* Taskbar */
.taskbar { display: flex; align-items: center; height: 72px; padding-top: 2px; background: #202222; color: #fff; }
.weather { display: flex; align-items: center; gap: 13px; width: 376px; padding-left: 32px; line-height: 24px; }
.weather svg { width: 32px; height: 32px; }
.weather span { color: #c4c6c6; }
.apps { display: flex; height: 60px; }
.apps button { position: relative; width: 66px; }
.apps svg { position: relative; width: 36px; height: 36px; }
.apps .open::after, .apps .current::after {
  content: "";
  position: absolute;
  bottom: 1px;
  width: 10px;
  height: 5px;
  border-radius: 3px;
  background: #9a9a9a;
}
.apps .current::after { width: 24px; background: #4cc2ff; }
.apps .current::before {
  content: "";
  position: absolute;
  inset: 0 3px;
  border: 1px solid #3a3c3c;
  border-radius: 6px;
  background: #2d2f2f;
}
.dot { position: absolute; top: 5px; right: 8px; width: 24px; height: 24px; border-radius: 50%; background: #ffc20e; }
.tray { display: flex; align-items: center; margin-left: auto; padding-right: 29px; }
.tray button { width: 36px; }
.tray svg { width: 24px; height: 24px; fill: none; stroke: #fff; stroke-width: 1.5px; }
.tray .lang { width: 74px; line-height: 23px; }
.clock { width: 109px; text-align: right; font-size: 17px; line-height: 23px; white-space: nowrap; }
.notice {
  width: 24px;
  height: 24px;
  margin-left: 18px;
  border-radius: 50%;
  background: #4cc2ff;
  color: #111;
  font-size: 17px;
  line-height: 24px;
  text-align: center;
}

.clock { font-size: 18px; }

/* Lettering inside icons */
.glyph-c { font: bold 16px "Open Sans", sans-serif; fill: #204056; }
.glyph-abp { font: bold 10px "Open Sans", sans-serif; fill: #fff; text-anchor: middle; }
.glyph-tiny { font: bold 5px "Open Sans", sans-serif; fill: #222; }
.glyph-ver { font: 5px "Open Sans", sans-serif; fill: #fff; text-anchor: middle; }
.glyph-pc { font: bold 11px "Open Sans", sans-serif; fill: #fff; }
```
